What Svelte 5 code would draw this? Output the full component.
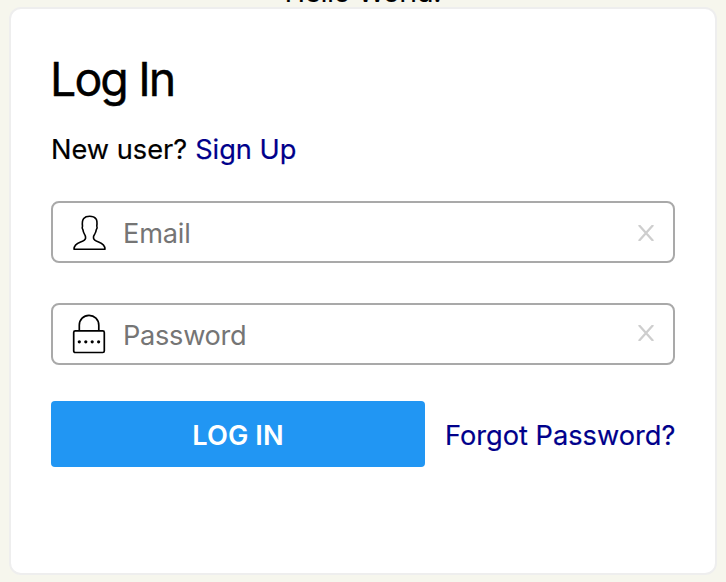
<script>
  let email = $state('');
  let password = $state('');
</script>

<div class="page">
  <p class="greeting">Hello World!</p>
  <main class="card">
    <h1>Log In</h1>
    <p class="signup"><span class="new">New user?</span><a href="#signup">Sign Up</a></p>
    <form onsubmit={(e) => e.preventDefault()}>
      <label class="field">
        <svg class="user" width="34" height="36" viewBox="0 0 34 36" fill="none" stroke="#000" stroke-width="1.6" stroke-linejoin="round">
          <path d="M1 34.2C1 30.5 3.8 28.5 7.6 27.1C10.7 25.9 12.4 25 12.6 23.1C12.8 21.1 12.2 20.1 11.2 18.6C10.4 17.4 10.1 16 9.9 14.7C9 13.4 9 12.2 9.5 11.1C9.1 7.8 9.2 5.2 10.7 3.4C12 1.9 14.3 1.3 16.7 1.3C19.3 1.3 21.6 2 22.9 3.7C24.3 5.5 24.2 7.8 23.8 11C24.4 12.3 24.2 13.6 23.3 14.7C23.1 16.2 22.7 17.6 21.8 18.9C20.7 20.3 20.2 21.2 20.5 23.1C20.8 25 22.6 25.9 25.6 27.1C29.3 28.5 32 30.5 32 34.2Z" />
        </svg>
        <input class="email" type="text" placeholder="Email" bind:value={email} />
        <button type="button" class="clear" aria-label="Clear email" onclick={() => (email = '')}>
          <svg width="16" height="16" viewBox="0 0 16 16" stroke="#cecece" stroke-width="2.3"><path d="M.8 0L15.2 16M15.2 0L.8 16" /></svg>
        </button>
      </label>
      <label class="field second">
        <svg class="lock" width="34" height="40" viewBox="0 0 34 40" fill="none" stroke="#000" stroke-width="1.7">
          <rect x="1.7" y="16.9" width="30.6" height="21.6" rx="1.6" />
          <path d="M7.3 16.5V11.3C7.3 5.5 11.6 1.4 17 1.4S26.8 5.5 26.8 11.3V16.5" />
          <g fill="#000" stroke="none">
            <circle cx="7.3" cy="27.8" r="1.6" /><circle cx="13.8" cy="27.8" r="1.6" /><circle cx="20.2" cy="27.8" r="1.6" /><circle cx="26.6" cy="27.8" r="1.6" />
          </g>
        </svg>
        <input type="password" placeholder="Password" bind:value={password} />
        <button type="button" class="clear" aria-label="Clear password" onclick={() => (password = '')}>
          <svg width="16" height="16" viewBox="0 0 16 16" stroke="#cecece" stroke-width="2.3"><path d="M.8 0L15.2 16M15.2 0L.8 16" /></svg>
        </button>
      </label>
      <div class="actions">
        <button class="submit">LOG IN</button>
        <a class="forgot" href="#forgot">Forgot Password?</a>
      </div>
    </form>
  </main>
</div>

<style>
  :global(body) { background: #f6f6ed; }
  .page {
    box-sizing: border-box;
    width: 726px;
    height: 582px;
    padding: 7px 9px;
    overflow: hidden;
    font-family: Inter, sans-serif;
    font-size: 27.2px;
    line-height: 34px;
    color: #000;
  }
  p, h1 { margin: 0; font-weight: 400; -webkit-text-stroke: 0.2px; }
  .greeting {
    height: 34px;
    margin: -31px 0 -3px;
    text-align: center;
  }
  .card {
    box-sizing: border-box;
    position: relative;
    width: 708px;
    height: 568px;
    padding: 41px 40px 40px;
    border: 2px solid #eee;
    border-radius: 12px;
    background: #fff;
  }
  h1 {
    margin-left: -1px;
    font-size: 46.5px;
    line-height: 58px;
    letter-spacing: -1.9px;
    -webkit-text-stroke: 0.4px;
  }
  .signup { display: flex; gap: 8px; margin-top: 25px; height: 34px; white-space: nowrap; }
  a { color: #00008b; text-decoration: none; }
  .field {
    box-sizing: border-box;
    display: flex;
    align-items: center;
    width: 624px;
    height: 62px;
    margin-top: 34px;
    padding: 0 19px;
    border: 2px solid #a9a9a9;
    border-radius: 8px;
  }
  .second { margin-top: 40px; }
  .user, .lock { flex: none; margin-right: 17px; }
  .user { margin: 2px 16px 0 1px; }
  .field input {
    flex: 1;
    min-width: 0;
    height: 36px;
    padding: 2px 0 0;
    border: 0;
    outline: 0;
    background: none;
    font: inherit;
    letter-spacing: -0.3px;
  }
  .field .email { letter-spacing: -0.2px; }
  input::placeholder { color: #757575; opacity: 1; }
  .clear { display: flex; padding: 2px 0 0; border: 0; background: none; }
  .second .clear { padding: 0 0 2px; }
  .actions { display: flex; align-items: center; gap: 20px; margin-top: 36px; }
  .submit {
    flex: none;
    width: 374px;
    height: 66px;
    padding: 4px 0 0;
    border: 0;
    border-radius: 4px;
    background: #2196f3;
    color: #fff;
    font: 600 27.2px/34px Inter, sans-serif;
    letter-spacing: 0.1px;
  }
  .forgot { padding-top: 4px; white-space: nowrap; -webkit-text-stroke: 0.2px; }
</style>
